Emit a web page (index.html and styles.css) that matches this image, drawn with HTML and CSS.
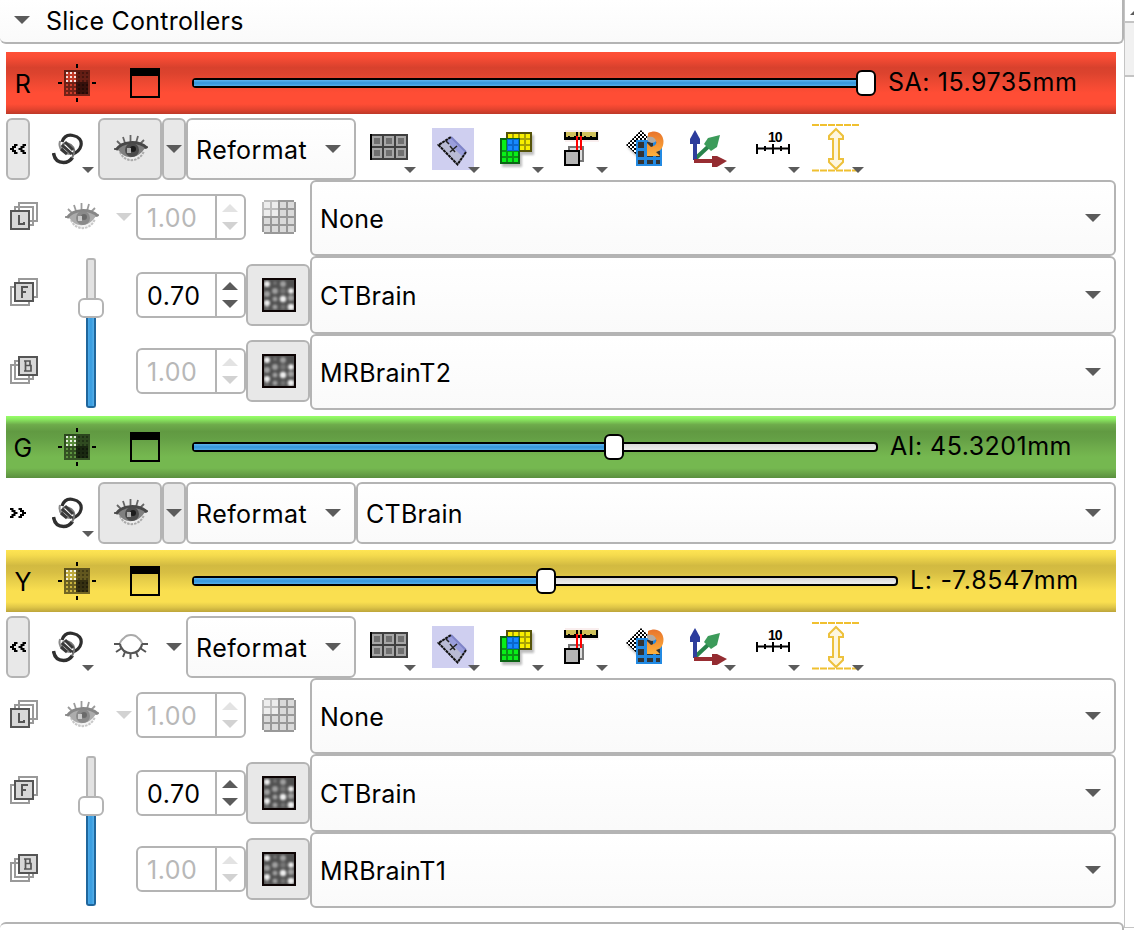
FILE: index.html
```html
<!DOCTYPE html>
<html lang="en">
<head>
<meta charset="utf-8">
<title>Slice Controllers</title>
<link rel="stylesheet" href="styles.css">
</head>
<body>
<svg class="sprite" width="0" height="0" aria-hidden="true">
  <defs>
    <pattern id="p-check" width="4" height="4" patternUnits="userSpaceOnUse"><rect width="4" height="4" fill="#fff"/><path d="M0 0h2v2H0zM2 2h2v2H2z" fill="#000"/></pattern>
    <linearGradient id="g-orange" x1="0" y1="0" x2="0" y2="1"><stop offset="0" stop-color="#e8742c"/><stop offset="1" stop-color="#ffb13c"/></linearGradient>
    <filter id="soft"><feGaussianBlur stdDeviation="1"/></filter>
  </defs>
  <symbol id="arrow" viewBox="0 0 16 8"><path d="M0 0h16L8 8z" fill="currentColor"/></symbol>
  <symbol id="cross" viewBox="0 0 38 38">
    <path d="M18 0h2v4h-2zM18 34h2v4h-2zM0 18h4v2H0zM34 18h4v2h-4z"/>
    <rect x="6" y="6" width="26" height="26" fill="#000" opacity=".55"/>
    <rect x="18" y="18" width="12" height="12" opacity=".5"/>
    <rect x="8" y="8" width="10" height="10" fill="currentColor" opacity=".6"/>
    <g fill="#fff"><path d="M8 8h2v2H8zM12 8h2v2h-2zM16 8h2v2h-2zM8 12h2v2H8zM12 12h2v2h-2zM16 12h2v2h-2zM8 16h2v2H8zM12 16h2v2h-2zM16 16h2v2h-2z" opacity=".85"/></g>
    <path d="M20 8h2v2h-2zM24 8h2v2h-2zM28 8h2v2h-2zM20 12h2v2h-2zM24 12h2v2h-2zM28 12h2v2h-2zM20 16h2v2h-2zM24 16h2v2h-2zM28 16h2v2h-2z" opacity=".3"/>
    <path d="M20 20h2v2h-2zM24 20h2v2h-2zM28 20h2v2h-2zM20 24h2v2h-2zM24 24h2v2h-2zM28 24h2v2h-2zM20 28h2v2h-2zM24 28h2v2h-2zM28 28h2v2h-2z" opacity=".35"/>
    <path d="M8 20h2v2H8zM12 20h2v2h-2zM16 20h2v2h-2zM8 24h2v2H8zM12 24h2v2h-2zM16 24h2v2h-2zM8 28h2v2H8zM12 28h2v2h-2zM16 28h2v2h-2z" fill="currentColor" opacity=".65"/>
  </symbol>
  <symbol id="window" viewBox="0 0 30 30"><path d="M0 0h30v30H0zM2 8v20h26V8z" fill-rule="evenodd"/></symbol>
  <symbol id="less" viewBox="0 0 18 12"><path d="M8.500 1H5v2H3v2H1v2h2v2h2v2h3.500V9H7V7H5V5h2V3h1.500zM17 1h-3.500v2h-2v2h-2v2h2v2h2v2H17V9h-1.500V7h-2V5h2V3H17z"/></symbol>
  <symbol id="link" viewBox="0 0 44 42">
    <g fill="none">
      <path d="M8 8c-2 7 3 13 11 13" stroke="#8a8a8a" stroke-width="2"/>
      <path d="M10 9C12 3 16 1.500 21 2.500c6 1 9 5 8 10-1 5-4 7-9 9" stroke="#2e2e2e" stroke-width="3.200"/>
      <path d="M1.500 20c1 7 5 9.500 10 9.500 4 0 7-2 9-5" stroke="#303030" stroke-width="3.500"/>
      <path d="M20 25c3-5 3-10-1-13-4-3-8-2-9 1 0 2 1 4 3 6" stroke="#777" stroke-width="2"/>
      <path d="M10 12l10 9M13 9l8 8M9 16l6 5" stroke="#3a3a3a" stroke-width="3"/>
    </g>
    <path d="M30 34h12l-6 6z" fill="#5b5b5b"/>
  </symbol>
  <symbol id="eye" viewBox="0 0 34 28">
    <path d="M3 6l5 5M9 2l2 6M16.500 0v7M24 1l-2 7M30 5l-5 5M0 14h8M34 12l-7 2" stroke="#666" stroke-width="1.800"/>
    <path d="M6 17C10 27.500 25 28.500 30 16" fill="#eee" stroke="#aaa" stroke-width="2" stroke-dasharray="2.500 1"/>
    <path d="M3 14C8 6 24 5 31 13l-3 4c-6 6-14 7-20 2z" fill="#808080"/>
    <path d="M2 15C8 6 24 5 33 13" fill="none" stroke="#484848" stroke-width="3"/>
    <circle cx="18" cy="15" r="7" fill="#4c4c4c"/><circle cx="19" cy="14" r="3" fill="#1c1c1c"/>
    <path d="M13 13h4v5h-4z" fill="#b0b0b0"/>
  </symbol>
  <symbol id="eye-closed" viewBox="0 0 34 28">
    <path d="M6 12c0-3 3-5 4-6 3-4 11-4 14 0 1 1 4 3 4 6" fill="none" stroke="#aaa" stroke-width="2"/>
    <path d="M6 12c0 4 3 5 4 7 4 3 10 3 14 0 1-2 4-3 4-7" fill="none" stroke="#555" stroke-width="2.200"/>
    <path d="M0 12h6M28 12h6M2 20l6-4M9 25l2-5M16.500 27v-5M24 25l-2-5M32 20l-6-4" stroke="#555" stroke-width="2"/>
  </symbol>
  <symbol id="layouts" viewBox="0 0 64 62">
    <path d="M14 16h38v26H14z" fill="#3f3f3f"/><path d="M14 16h2v26h-2z"/>
    <path d="M16 18h10v10H16zM28 18h10v10H28zM40 18h10v10H40zM16 30h10v10H16zM28 30h10v10H28zM40 30h10v10H40z" fill="#a6a6a6"/>
    <path d="M18 20h6v6h-6zM30 20h6v6h-6zM42 20h6v6h-6zM18 32h6v6h-6zM30 32h6v6h-6zM42 32h6v6h-6z" fill="#707070"/>
  </symbol>
  <symbol id="plane" viewBox="0 0 64 62">
    <path d="M12 10h42v42H12z" fill="#cfcff0"/>
    <path d="M18.500 27L31 19l15 15-8.500 12.500z" fill="#b9bbd4"/>
    <path d="M31 19l15 15-3 5-17-16z" fill="#9a9edc"/>
    <path d="M31 19l15 15" stroke="#7f84c8" stroke-width="2"/>
    <path d="M46 34l-8.500 12.500L18.500 27 31 19" fill="none" stroke="#111" stroke-width="2" stroke-dasharray="3 .6"/>
    <path d="M30 34l7-6M30 28l5 6M26 23l3 3" stroke="#222" stroke-width="1.500"/>
  </symbol>
  <symbol id="lightbox" viewBox="0 0 64 62">
    <path d="M24 17h26v20H38v12H18v-4z" fill="#888" opacity=".55" filter="url(#soft)"/>
    <path d="M22 14h26v20H22z" fill="#56540a"/>
    <path d="M24 16h4v4h-4zM30 16h4v4h-4zM36 16h4v4h-4zM42 16h4v4h-4zM36 22h4v4h-4zM42 22h4v4h-4zM36 28h4v4h-4zM42 28h4v4h-4z" fill="#f8ef00"/>
    <path d="M24 16h22v16H24z" fill="#f8ef00" opacity=".5"/>
    <path d="M16 20h20v26H16z" fill="#0b6514"/>
    <path d="M18 22h16v22H18z" fill="#08ef18" opacity=".35"/>
    <path d="M18 22h4v10h-4zM18 34h4v4h-4zM24 34h4v4h-4zM30 34h4v4h-4zM18 40h4v4h-4zM24 40h4v4h-4zM30 40h4v4h-4z" fill="#08ef18"/>
    <path d="M23 21h12v12H23z" fill="#0a66cc"/><path d="M24 22h4v4h-4zM30 22h4v4h-4zM24 28h4v4h-4zM30 28h4v4h-4z" fill="#1689ff"/>
  </symbol>
  <symbol id="spacing" viewBox="0 0 64 62">
    <path d="M17 12h34v12H17z" fill="#f9eeee"/>
    <path d="M16 14h34v8H16z"/><path d="M18 14h10v5H18zM30 14h2v5h-2zM34 14h14v5H34z" fill="#d0bf5a"/>
    <path d="M20 18h2v2h-2zM26 18h2v2h-2zM36 18h2v2h-2zM42 18h2v2h-2z"/>
    <path d="M21 29h14v14H21z" fill="#ddd" stroke="#777" stroke-width="2"/>
    <path d="M29 18v14M33 18v14" stroke="#f00" stroke-width="2"/>
    <path d="M17 33h14v14H17z" fill="#b5b5b5" stroke="#000" stroke-width="2"/>
  </symbol>
  <symbol id="rotate" viewBox="0 0 64 62">
    <path d="M15 29l15 15V30z" fill="#bbb" filter="url(#soft)"/>
    <path d="M29 12l14 14-14 15-15-14z" fill="url(#p-check)"/>
    <path d="M24 22h26v26H24z" fill="#238ae2"/>
    <path d="M26 24h6v6h-6zM35 24h6v6h-6zM44 24h4v6h-4zM26 33h6v6h-6zM35 33h6v6h-6zM44 33h4v6h-4zM26 42h6v4h-6zM35 42h6v4h-6zM44 42h4v4h-4z" fill="#343434"/>
    <circle cx="40" cy="20" r="5" fill="#b3aaa2"/>
    <path d="M36 15c8-4 15 0 15.500 8 0 7-3 10-7.500 11l4 4H35V25l4 4c4-1 6-3 5-6s-3-5-8-4z" fill="url(#g-orange)"/>
  </symbol>
  <symbol id="axes" viewBox="0 0 64 62">
    <path d="M19 41l15-14" stroke="#28834b" stroke-width="4"/><path d="M44 17l-3 12-6 4-7-7 4-6z" fill="#3c9b5a"/>
    <path d="M19 42V23" stroke="#303f9c" stroke-width="4"/><path d="M19 12l5 9v5H14v-5z" fill="#2c3c9c"/>
    <path d="M18 43h19" stroke="#982d32" stroke-width="4"/><path d="M51 43l-10-5h-5v11h5z" fill="#942c31"/>
  </symbol>
  <symbol id="ruler" viewBox="0 0 64 62">
    <path d="M17 30.500h32M17 26v10M49 26v10M33 26v10M25 28v5M41 28v5" stroke="#000" stroke-width="2"/>
  </symbol>
  <symbol id="slab" viewBox="0 0 64 62">
    <path d="M8 7h48M8 52.500h48" stroke="#f0c030" stroke-width="2" stroke-dasharray="7 1"/>
    <path d="M32 11l7 7v3h-4v20h4v3l-7 7-7-7v-3h4V21h-4v-3z" fill="#fdf6df" stroke="#edc13c" stroke-width="2"/>
  </symbol>
  <symbol id="layer-l" viewBox="0 0 28 28">
    <path d="M9 1h18v18H9zM5 5h18v18H5z" fill="#fff" stroke="#999" stroke-width="2"/><path d="M1 9h18v18H1z" fill="#d8d8d8" stroke="#555" stroke-width="2"/>
    <path d="M9 13v9h5v-2" fill="none" stroke="#555" stroke-width="2"/>
  </symbol>
  <symbol id="layer-f" viewBox="0 0 28 28">
    <path d="M9 1h18v18H9zM1 9h18v18H1z" fill="#fff" stroke="#999" stroke-width="2"/><path d="M5 5h18v18H5z" fill="#d8d8d8" stroke="#555" stroke-width="2"/>
    <path d="M12 20V9h6M12 14h4" fill="none" stroke="#555" stroke-width="2"/>
  </symbol>
  <symbol id="layer-b" viewBox="0 0 28 28">
    <path d="M1 9h18v18H1zM5 5h18v18H5z" fill="#fff" stroke="#999" stroke-width="2"/><path d="M9 1h18v18H9z" fill="#d8d8d8" stroke="#555" stroke-width="2"/>
    <path d="M14 5h6v4M15.500 5v10M14 15h7v-5.500h-6" fill="none" stroke="#555" stroke-width="1.700"/>
  </symbol>
  <symbol id="grid" viewBox="0 0 34 34">
    <path d="M2 0h30v2h2v30h-2v2H2v-2H0V2h2z" fill="#999"/><path d="M2 0h14v16H0V2h2z" fill="#bdbdbd"/>
    <path d="M2 2h6v6H2zM10 2h6v6h-6zM2 10h6v6H2zM10 10h6v6h-6z" fill="#ededed"/>
    <path d="M18 2h6v6h-6zM26 2h6v6h-6zM18 10h6v6h-6zM26 10h6v6h-6zM2 18h6v6H2zM10 18h6v6h-6zM18 18h6v6h-6zM26 18h6v6h-6zM2 26h6v6H2zM10 26h6v6h-6zM18 26h6v6h-6zM26 26h6v6h-6z" fill="#dadada"/>
  </symbol>
  <symbol id="interp" viewBox="0 0 34 34">
    <path d="M0 0h34v34H0z" fill="#505050"/>
    <g filter="url(#soft)">
      <g fill="#eee"><circle cx="5" cy="6" r="3"/><circle cx="5" cy="25" r="3"/><circle cx="21" cy="21" r="3.200"/><circle cx="29" cy="29" r="3.300"/><circle cx="29" cy="13" r="2.800"/></g>
      <g fill="#a0a0a0"><circle cx="21" cy="6" r="3"/><circle cx="13" cy="13" r="3"/><circle cx="5" cy="16" r="3"/><circle cx="29" cy="20" r="3"/><circle cx="13" cy="21" r="2.500"/><circle cx="13" cy="29" r="2.500"/></g>
      <g fill="#747474"><circle cx="13" cy="5" r="2"/><circle cx="21" cy="13" r="3"/><circle cx="5" cy="30" r="2"/><circle cx="21" cy="29" r="2.500"/></g>
    </g>
    <path d="M1 1h32v32H1z" fill="none" stroke="#0d0404" stroke-width="2"/>
  </symbol>
</svg>

<div class="app">
  <main class="panel">
    <header class="section-title"><svg class="tri"><use href="#arrow"/></svg><span>Slice Controllers</span></header>

    <section class="slice">
      <div class="bar red">
        <span class="name">R</span><svg class="cross"><use href="#cross"/></svg><svg class="win"><use href="#window"/></svg>
        <div class="slider"><div class="fill" style="width:98%"></div><div class="knob" style="left:664px"></div></div>
        <span class="value v-red">SA: 15.9735mm</span>
      </div>
      <div class="tools">
        <button class="btn more"><svg><use href="#less"/></svg></button>
        <svg class="link"><use href="#link"/></svg>
        <button class="btn eye-btn"><svg class="eye"><use href="#eye"/></svg></button>
        <button class="btn drop"><svg class="tri"><use href="#arrow"/></svg></button>
        <div class="combo reformat"><span>Reformat</span><svg class="tri"><use href="#arrow"/></svg></div>
        <div class="tool"><svg><use href="#layouts"/></svg><i></i></div>
        <div class="tool"><svg><use href="#plane"/></svg><i></i></div>
        <div class="tool"><svg><use href="#lightbox"/></svg><i></i></div>
        <div class="tool"><svg><use href="#spacing"/></svg><i></i></div>
        <div class="tool"><svg><use href="#rotate"/></svg></div>
        <div class="tool"><svg><use href="#axes"/></svg><i></i></div>
        <div class="tool"><svg><use href="#ruler"/></svg><b>10</b><i></i></div>
        <div class="tool"><svg><use href="#slab"/></svg><i></i></div>
      </div>
      <div class="layers">
        <svg class="tag"><use href="#layer-l"/></svg>
        <div class="seg off"><svg class="eye"><use href="#eye"/></svg><svg class="tri"><use href="#arrow"/></svg></div>
        <div class="spin off"><span>1.00</span><div><svg class="tri up"><use href="#arrow"/></svg><svg class="tri"><use href="#arrow"/></svg></div></div>
        <div class="plain"><svg class="sq"><use href="#grid"/></svg></div>
        <div class="combo"><span>None</span><svg class="tri"><use href="#arrow"/></svg></div>

        <svg class="tag raised"><use href="#layer-f"/></svg>
        <div class="fader"><div class="groove"></div><div class="grip"></div><div class="level"></div></div>
        <div class="spin"><span>0.70</span><div><svg class="tri up"><use href="#arrow"/></svg><svg class="tri"><use href="#arrow"/></svg></div></div>
        <button class="btn"><svg class="sq"><use href="#interp"/></svg></button>
        <div class="combo"><span>CTBrain</span><svg class="tri"><use href="#arrow"/></svg></div>

        <svg class="tag last"><use href="#layer-b"/></svg>
        <div class="spin off last"><span>1.00</span><div><svg class="tri up"><use href="#arrow"/></svg><svg class="tri"><use href="#arrow"/></svg></div></div>
        <button class="btn last"><svg class="sq"><use href="#interp"/></svg></button>
        <div class="combo"><span>MRBrainT2</span><svg class="tri"><use href="#arrow"/></svg></div>
      </div>
    </section>

    <section class="slice">
      <div class="bar green">
        <span class="name">G</span><svg class="cross"><use href="#cross"/></svg><svg class="win"><use href="#window"/></svg>
        <div class="slider"><div class="fill" style="width:61.5%"></div><div class="knob" style="left:412px"></div></div>
        <span class="value v-green">AI: 45.3201mm</span>
      </div>
      <div class="tools">
        <button class="btn more flat"><svg class="flip"><use href="#less"/></svg></button>
        <svg class="link"><use href="#link"/></svg>
        <button class="btn eye-btn"><svg class="eye"><use href="#eye"/></svg></button>
        <button class="btn drop"><svg class="tri"><use href="#arrow"/></svg></button>
        <div class="combo reformat"><span>Reformat</span><svg class="tri"><use href="#arrow"/></svg></div>
        <div class="combo volume"><span>CTBrain</span><svg class="tri"><use href="#arrow"/></svg></div>
      </div>
    </section>

    <section class="slice">
      <div class="bar yellow">
        <span class="name">Y</span><svg class="cross"><use href="#cross"/></svg><svg class="win"><use href="#window"/></svg>
        <div class="slider"><div class="fill" style="width:50%"></div><div class="knob" style="left:344px"></div></div>
        <span class="value v-yellow">L: -7.8547mm</span>
      </div>
      <div class="tools">
        <button class="btn more"><svg><use href="#less"/></svg></button>
        <svg class="link"><use href="#link"/></svg>
        <button class="btn eye-btn flat"><svg class="eye closed"><use href="#eye-closed"/></svg></button>
        <button class="btn drop flat"><svg class="tri"><use href="#arrow"/></svg></button>
        <div class="combo reformat"><span>Reformat</span><svg class="tri"><use href="#arrow"/></svg></div>
        <div class="tool"><svg><use href="#layouts"/></svg><i></i></div>
        <div class="tool"><svg><use href="#plane"/></svg><i></i></div>
        <div class="tool"><svg><use href="#lightbox"/></svg><i></i></div>
        <div class="tool"><svg><use href="#spacing"/></svg><i></i></div>
        <div class="tool"><svg><use href="#rotate"/></svg></div>
        <div class="tool"><svg><use href="#axes"/></svg><i></i></div>
        <div class="tool"><svg><use href="#ruler"/></svg><b>10</b><i></i></div>
        <div class="tool"><svg><use href="#slab"/></svg><i></i></div>
      </div>
      <div class="layers">
        <svg class="tag"><use href="#layer-l"/></svg>
        <div class="seg off"><svg class="eye"><use href="#eye"/></svg><svg class="tri"><use href="#arrow"/></svg></div>
        <div class="spin off"><span>1.00</span><div><svg class="tri up"><use href="#arrow"/></svg><svg class="tri"><use href="#arrow"/></svg></div></div>
        <div class="plain"><svg class="sq"><use href="#grid"/></svg></div>
        <div class="combo"><span>None</span><svg class="tri"><use href="#arrow"/></svg></div>

        <svg class="tag raised"><use href="#layer-f"/></svg>
        <div class="fader"><div class="groove"></div><div class="grip"></div><div class="level"></div></div>
        <div class="spin"><span>0.70</span><div><svg class="tri up"><use href="#arrow"/></svg><svg class="tri"><use href="#arrow"/></svg></div></div>
        <button class="btn"><svg class="sq"><use href="#interp"/></svg></button>
        <div class="combo"><span>CTBrain</span><svg class="tri"><use href="#arrow"/></svg></div>

        <svg class="tag last"><use href="#layer-b"/></svg>
        <div class="spin off last"><span>1.00</span><div><svg class="tri up"><use href="#arrow"/></svg><svg class="tri"><use href="#arrow"/></svg></div></div>
        <button class="btn last"><svg class="sq"><use href="#interp"/></svg></button>
        <div class="combo"><span>MRBrainT1</span><svg class="tri"><use href="#arrow"/></svg></div>
      </div>
    </section>
    <div class="next-section"></div>
  </main>
  <aside class="scrollbar"><div class="step"><svg class="tri up"><use href="#arrow"/></svg></div><div class="thumb"></div></aside>
</div>
</body>
</html>
```

FILE: styles.css
```css
* { box-sizing: border-box; }
body { margin: 0; background: #fff; color: #000; font: 25px/30px Inter, "Liberation Sans", sans-serif; letter-spacing: .24px; }
svg { display: block; flex: none; }
.sprite { position: absolute; }
.app { display: flex; width: 1134px; height: 930px; overflow: hidden; }
.panel { width: 1124px; flex: none; }
.tri { width: 16px; height: 8px; color: #5b5b5b; }
.up { transform: scaleY(-1); }

.section-title { display: flex; align-items: center; height: 44px; padding: 0 0 1px 14px; gap: 16px; border: solid #b4b4b4; border-width: 0 2px 2px 0; border-radius: 0 0 6px 6px; background: linear-gradient(#fff, #fafafa); }
.section-title .tri { margin-top: -2px; }
.slice { margin: 8px 8px 0 6px; }
.slice + .slice { margin-top: 6px; }

.bar { display: flex; align-items: center; height: 62px; }
.red { color: #ff4d35; background: linear-gradient(#ff5037, #fa4d35 8%, #d8412d 25%, #dc432e 34%, #ee4932 50%, #ff4d35 66%, #ff4d35 84%, #e5442f 92%, #bd3928); }
.green { color: #75b850; background: linear-gradient(#98ff68, #8aea60 5%, #6eab4b 14%, #619a42 25%, #649f45 36%, #6eab4b 50%, #75b850 66%, #75b850 84%, #69a448 92%, #5a8f3e); }
.yellow { color: #fadf50; background: linear-gradient(#fee453, #f6dc4e 8%, #d2ba41 25%, #d7be43 36%, #e8cf4a 50%, #fadf50 66%, #fadf50 84%, #e0c748 92%, #bda53a); }
.name { width: 34px; text-align: center; color: #000; padding-top: 2px; }
.cross { width: 38px; height: 38px; margin-left: 18px; }
.win { width: 30px; height: 30px; margin-left: 34px; color: #000; }
.slider { position: relative; flex: 1; height: 10px; margin-left: 32px; border: 2px solid #000; border-radius: 4px; background: linear-gradient(#d9d9d9, #ededed); }
.fill { height: 6px; background: linear-gradient(#5bb3ee, #3595da 50%, #51ade9); }
.knob { position: absolute; top: -10px; margin-left: -2px; width: 20px; height: 26px; border: 2px solid #000; border-radius: 6px; background: #fff; }
.value { padding: 0 0 2px 12px; color: #000; }
.v-red { width: 240px; letter-spacing: .54px; }
.v-green { width: 238px; letter-spacing: .47px; }
.v-yellow { width: 218px; letter-spacing: .7px; }

.tools { display: flex; height: 62px; margin-top: 4px; }
.btn { display: flex; align-items: center; justify-content: center; width: 64px; height: 62px; padding: 0; border: 2px solid #b4b4b4; border-radius: 6px; background: #e8e8e8; }
.flat { border-color: transparent; background: none; }
.more { width: 24px; }
.more svg { width: 18px; height: 12px; }
.flip { transform: scaleX(-1); }
.link { width: 44px; height: 42px; margin: 15px 2px 0 22px; }
.eye { width: 34px; height: 28px; }
.eye-btn .eye { margin-left: 2px; }
.eye-btn .closed { margin: -2px 0 0 1px; }
.drop { width: 24px; }
.combo { display: flex; align-items: center; justify-content: space-between; padding: 0 13px 0 8px; border: 2px solid #b4b4b4; border-radius: 6px; background: linear-gradient(#fff, #fafafa); }
.combo span { padding-top: 1px; }
.combo .tri { margin-top: -1px; }
.reformat { width: 170px; letter-spacing: .42px; }
.volume { flex: 1; }
.tool { position: relative; width: 64px; height: 62px; }
.tool svg { width: 64px; height: 62px; }
.tool i { position: absolute; left: 48px; top: 49px; border: solid transparent; border-width: 6px 6px 0; border-top-color: #5b5b5b; }
.tool b { position: absolute; left: 28px; top: 12px; font: bold 14px/14px "Liberation Sans", sans-serif; letter-spacing: -1px; }

.layers { display: grid; grid-template-columns: 54px 76px 110px 64px 1fr; grid-template-rows: 76px 78px 76px; align-items: center; }
.layers .combo { align-self: stretch; }
.tag { width: 28px; height: 28px; margin: -4px 0 0 4px; }
.raised { margin-top: -6px; }
.seg { display: flex; align-items: center; gap: 17px; padding-left: 5px; margin-top: -3px; }
.off .eye { opacity: .65; }
.off .tri { color: #d2d2d2; }
.spin { display: flex; height: 46px; border: 2px solid #b4b4b4; border-radius: 6px; background: #fff; }
.spin span { width: 77px; padding: 7px 0 0 9px; letter-spacing: .5px; }
.spin div { flex: 1; display: flex; flex-direction: column; align-items: center; gap: 10px; padding: 8px 1px 0 0; border-left: 2px solid #b4b4b4; }
.spin.off { color: #b8b8b8; margin-top: -2px; }
.off .up { opacity: .6; }
.plain { display: flex; justify-content: center; padding-left: 2px; margin-top: -2px; }
.btn.last { margin-top: -2px; }
.sq { width: 34px; height: 34px; }
.btn .sq { margin-left: 2px; }
.fader { grid-column: 2; grid-row: 2 / 4; display: flex; flex-direction: column; align-items: center; justify-self: start; width: 26px; height: 150px; margin: 0 0 0 18px; }
.groove { width: 10px; height: 40px; border: 2px solid #b4b4b4; border-bottom: 0; border-radius: 3px 3px 0 0; background: #e2e2e2; }
.grip { width: 26px; height: 20px; border: 2px solid #b4b4b4; border-radius: 6px; background: #fff; }
.level { width: 10px; flex: 1; border: 2px solid #20669c; border-top: 0; border-radius: 0 0 3px 3px; background: linear-gradient(90deg, #4daae8, #379bdf, #55afe9); }
.next-section { height: 20px; margin-top: 14px; border: 2px solid #b4b4b4; border-left: 0; border-radius: 6px; }

.scrollbar { width: 10px; flex: none; height: 928px; border-left: 1px solid #c4c4c4; border-bottom: 1px solid #c4c4c4; overflow: hidden; }
.step { height: 23px; padding: 7px 0 0 5px; border-bottom: 2px solid #c4c4c4; }
.thumb { height: 54px; border-bottom: 2px solid #c4c4c4; background: #f1f1f1; }
```
